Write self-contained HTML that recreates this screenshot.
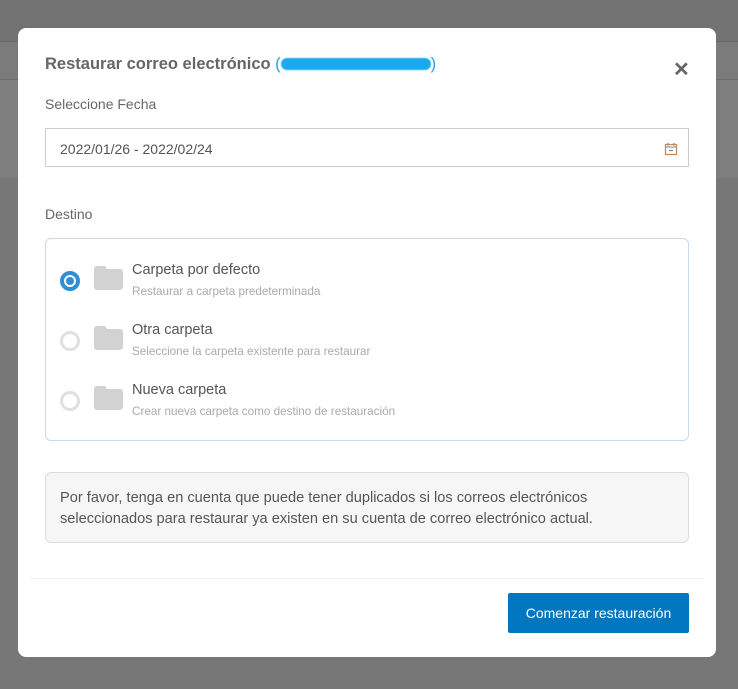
<!DOCTYPE html>
<html><head><meta charset="utf-8">
<style>
*{box-sizing:border-box;margin:0;padding:0}
html,body{width:738px;height:689px;overflow:hidden}
body{position:relative;font-family:"Liberation Sans",sans-serif;background:#7a7a7a}
.bg1{position:absolute;left:0;top:0;width:738px;height:41px;background:#727272}
.bg2{position:absolute;left:0;top:41px;width:738px;height:39px;background:#7b7b7b;border-top:1px solid #666;border-bottom:1px solid #6c6c6c}
.bg3{position:absolute;left:0;top:80px;width:738px;height:98px;background:#7e7e7e}
.bg4{position:absolute;left:0;top:178px;width:738px;height:511px;background:#777}
.modal{position:absolute;left:18px;top:28px;width:698px;height:629px;background:#fff;border-radius:8px}
.title{position:absolute;left:27px;top:27px;font-size:16.5px;font-weight:bold;color:#666}
.title .p{color:#1ea0e8;font-weight:normal}
.blur{display:inline-block;width:150px;height:12px;background:#1aa8f0;border-radius:6px;vertical-align:-1px;filter:blur(.6px)}
.close{position:absolute;left:655px;top:29px;font-size:20px;font-weight:bold;color:#666}
.lbl{position:absolute;left:27px;font-size:14px;color:#666}
.input{position:absolute;left:27px;top:100px;width:644px;height:39px;border:1px solid #ccc;font-size:14px;color:#555;padding:12px 14px}
.cal{position:absolute;right:10px;top:13px}
.box{position:absolute;left:27px;top:210px;width:644px;height:203px;border:1px solid #c9d8ea;border-radius:6px}
.opt{position:absolute;left:0;width:100%}
.radio{position:absolute;left:14px;top:32px;width:20px;height:20px;border-radius:50%;border:3px solid #dde1e4}
.radio.on{border:4px solid #2e8fd8}
.radio.on:after{content:"";position:absolute;left:2px;top:2px;width:8px;height:8px;border-radius:50%;background:#2e8fd8}
.fold{position:absolute;left:48px;top:27px}
.t1{position:absolute;left:86px;top:23px;font-size:14.5px;color:#555}
.t2{position:absolute;left:86px;top:46px;font-size:11.7px;color:#aaa}
.note{position:absolute;left:27px;top:444px;width:644px;height:71px;background:#f6f6f6;border:1px solid #ddd;border-radius:6px;padding:15px 14px;font-size:14.6px;line-height:21px;color:#555;white-space:nowrap}
.hr{position:absolute;left:12px;top:550px;width:674px;border-top:1px solid #eee}
.btn{position:absolute;left:490px;top:565px;width:181px;height:40px;background:#0077c0;border-radius:2px;color:#fff;font-size:14px;text-align:center;line-height:40px}
</style></head><body>
<div class="bg1"></div><div class="bg2"></div><div class="bg3"></div><div class="bg4"></div>
<div class="modal">
<div class="title">Restaurar correo electrónico <span class="p">(<span class="blur"></span>)</span></div>
<div class="close">✕</div>
<div class="lbl" style="top:68px">Seleccione Fecha</div>
<div class="input">2022/01/26 - 2022/02/24
<svg class="cal" width="14" height="14" viewBox="0 0 14 14"><rect x="1.5" y="2.5" width="11" height="10" fill="none" stroke="#c98a55" stroke-width="1.3"/><line x1="1.5" y1="5" x2="12.5" y2="5" stroke="#7aa0d0" stroke-width="1.3"/><line x1="4" y1="1" x2="4" y2="3.5" stroke="#888" stroke-width="1.3"/><line x1="10" y1="1" x2="10" y2="3.5" stroke="#888" stroke-width="1.3"/><line x1="5" y1="8.5" x2="9" y2="8.5" stroke="#888" stroke-width="1.3"/></svg></div>
<div class="lbl" style="top:178px">Destino</div>
<div class="box">
 <div class="opt" style="top:0"><div class="radio on"></div>
  <svg class="fold" width="29" height="24"><path d="M3 0h8l2 3h13a3 3 0 0 1 3 3v15a3 3 0 0 1-3 3H3a3 3 0 0 1-3-3V3a3 3 0 0 1 3-3z" fill="#d2d2d2"/></svg>
  <div class="t1">Carpeta por defecto</div><div class="t2">Restaurar a carpeta predeterminada</div></div>
 <div class="opt" style="top:60px"><div class="radio"></div>
  <svg class="fold" width="29" height="24"><path d="M3 0h8l2 3h13a3 3 0 0 1 3 3v15a3 3 0 0 1-3 3H3a3 3 0 0 1-3-3V3a3 3 0 0 1 3-3z" fill="#d2d2d2"/></svg>
  <div class="t1">Otra carpeta</div><div class="t2">Seleccione la carpeta existente para restaurar</div></div>
 <div class="opt" style="top:120px"><div class="radio"></div>
  <svg class="fold" width="29" height="24"><path d="M3 0h8l2 3h13a3 3 0 0 1 3 3v15a3 3 0 0 1-3 3H3a3 3 0 0 1-3-3V3a3 3 0 0 1 3-3z" fill="#d2d2d2"/></svg>
  <div class="t1">Nueva carpeta</div><div class="t2">Crear nueva carpeta como destino de restauración</div></div>
</div>
<div class="note">Por favor, tenga en cuenta que puede tener duplicados si los correos electrónicos<br>seleccionados para restaurar ya existen en su cuenta de correo electrónico actual.</div>
<div class="hr"></div>
<div class="btn">Comenzar restauración</div>
</div>
</body></html>
